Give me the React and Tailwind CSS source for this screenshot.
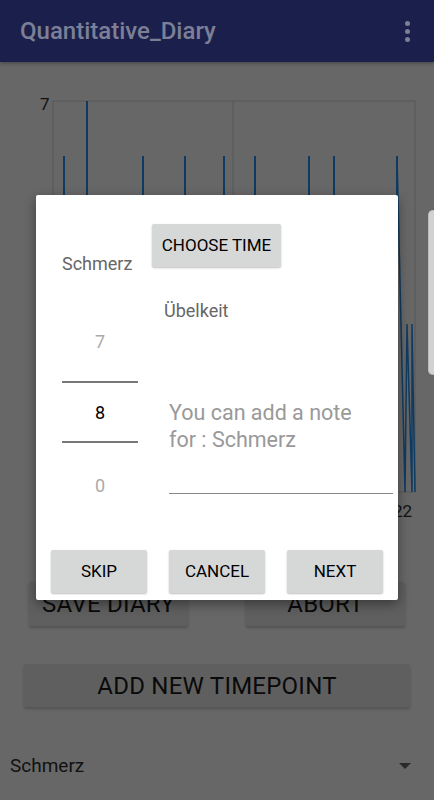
import React from 'react';

const bars = [64, 87, 143, 185, 224, 255, 309, 334, 397];

const Chart = () => (
  <svg width="434" height="480" viewBox="0 62 434 480" className="block">
    <text x="40" y="110" fontSize="17" fill="#111" fontFamily="Roboto, sans-serif">7</text>
    <rect x="53" y="101" width="362" height="391" fill="none" stroke="#585858" strokeWidth="1" />
    <line x1="233" y1="101" x2="233" y2="492" stroke="#585858" strokeWidth="1" />
    {bars.map((x, i) => (
      <line key={i} x1={x} y1={x === 87 ? 101 : 156} x2={x} y2="492" stroke="#0f3b62" strokeWidth="2" />
    ))}
    <polyline points="397,156 405,492 407,324 412,492 412,324 415,492" fill="none" stroke="#0f3b62" strokeWidth="1.5" />
    <text x="393" y="517" fontSize="17" fill="#111" fontFamily="Roboto, sans-serif">22</text>
  </svg>
);

const DialogButton = ({ children, className = '' }) => (
  <button className={`h-[43px] bg-[#d6d7d7] rounded-[2px] shadow-[0_1px_2px_rgba(0,0,0,0.25)] text-[17px] font-normal text-black ${className}`}>
    {children}
  </button>
);

const BgButton = ({ children, className = '' }) => (
  <div className={`h-[44px] bg-[#5f5f5f] rounded-[2px] shadow-[0_2px_3px_rgba(0,0,0,0.2)] flex items-center justify-center text-[24px] font-normal tracking-[0.01em] text-[#0a0a0a] ${className}`}>
    {children}
  </div>
);

export default function App() {
  return (
    <div className="relative w-[434px] h-[800px] overflow-hidden bg-[#676767] font-['Roboto',sans-serif]">
      {/* app bar (dimmed) */}
      <div className="h-[62px] bg-[#1b1f4b] flex items-center justify-between pl-5 pr-6 shadow-[0_2px_3px_rgba(0,0,0,0.25)]">
        <span className="text-[24px] font-medium text-[#7c7f96]">Quantitative_Diary</span>
        <div className="flex flex-col gap-[3px]">
          <span className="w-[5px] h-[5px] rounded-full bg-[#7c7f96]" />
          <span className="w-[5px] h-[5px] rounded-full bg-[#7c7f96]" />
          <span className="w-[5px] h-[5px] rounded-full bg-[#7c7f96]" />
        </div>
      </div>

      <Chart />

      <div className="flex justify-between px-[29px] mt-[40px]">
        <BgButton className="w-[159px]">SAVE DIARY</BgButton>
        <BgButton className="w-[159px]">ABORT</BgButton>
      </div>

      <BgButton className="mx-[24px] mt-[38px] !h-[43px]">ADD NEW TIMEPOINT</BgButton>

      <div className="mt-[45px] flex items-center justify-between pl-[10px] pr-[23px]">
        <span className="text-[19px] text-[#111]">Schmerz</span>
        <span className="w-0 h-0 border-l-[6px] border-r-[6px] border-t-[6px] border-l-transparent border-r-transparent border-t-[#2a2a2a]" />
      </div>

      {/* dialog */}
      <div className="absolute left-[36px] top-[195px] w-[362px] h-[405px] bg-white rounded-[2px] shadow-[0_4px_12px_rgba(0,0,0,0.4)] flex flex-col">
        <div className="flex pl-[26px] pt-[29px]">
          <div className="w-[76px] flex flex-col">
            <span className="mt-[30px] text-[18px] leading-[20px] text-[#666] whitespace-nowrap">Schmerz</span>
            <div className="mt-[27px] flex flex-col items-center">
              <div className="h-[80px] w-full flex items-center justify-center text-[18px] text-[#aaa]">7</div>
              <div className="h-[2px] w-full bg-[#777]" />
              <div className="h-[58px] w-full flex items-center justify-center text-[18px] text-black">8</div>
              <div className="h-[2px] w-full bg-[#777]" />
              <div className="h-[84px] w-full flex items-center justify-center text-[18px] text-[#aaa]">0</div>
            </div>
          </div>
          <div className="ml-[14px] flex-1 flex flex-col items-start pr-[5px]">
            <DialogButton className="w-[129px]">CHOOSE TIME</DialogButton>
            <span className="mt-[34px] ml-[12px] text-[18px] leading-[20px] text-[#666]">Übelkeit</span>
            <div className="mt-[78px] ml-[17px] self-stretch">
              <p className="text-[21.5px] leading-[27px] text-[#999]">You can add a note<br />for : Schmerz</p>
              <div className="mt-[40px] h-px bg-[#888]" />
            </div>
          </div>
        </div>
        <div className="mt-auto mb-[7px] flex justify-between px-[15px]">
          <DialogButton className="w-[96px]">SKIP</DialogButton>
          <DialogButton className="w-[96px]">CANCEL</DialogButton>
          <DialogButton className="w-[96px]">NEXT</DialogButton>
        </div>
      </div>

      {/* edge panel handle */}
      <div className="absolute right-0 top-[210px] w-[6px] h-[165px] bg-[#d2d2d2] rounded-l-[5px] border border-r-0 border-[#bbb]" />
    </div>
  );
}
